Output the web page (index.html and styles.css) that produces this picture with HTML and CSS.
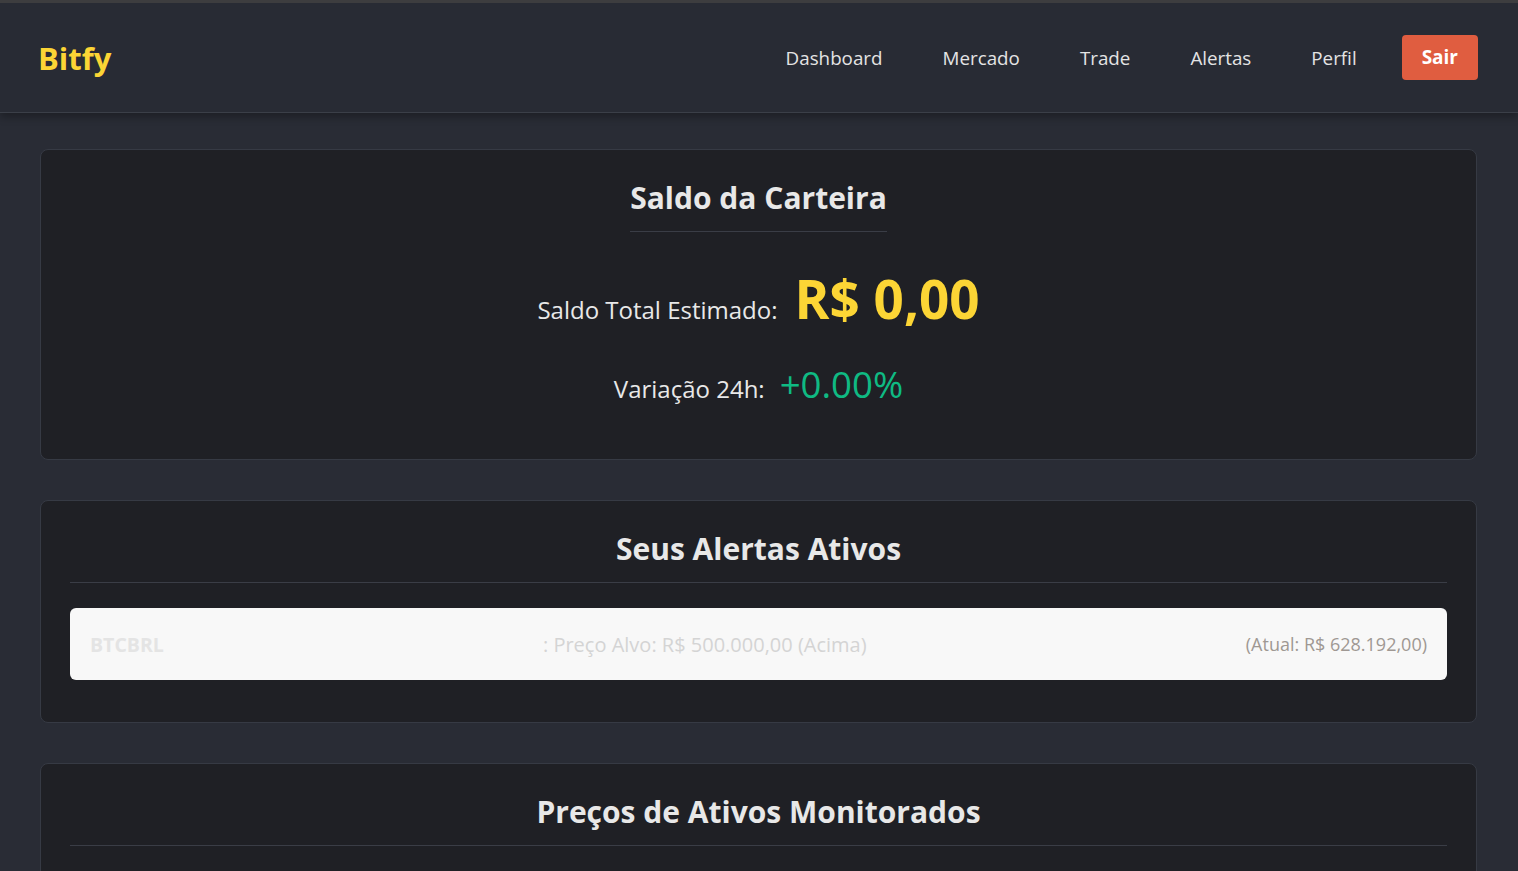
FILE: index.html
```html
<!DOCTYPE html>
<html lang="pt-BR">
<head>
<meta charset="utf-8">
<title>Bitfy - Dashboard</title>
<link rel="stylesheet" href="styles.css">
</head>
<body>
<header class="topbar">
  <div class="logo">Bitfy</div>
  <nav class="nav">
    <a class="nav-link" href="#">Dashboard</a>
    <a class="nav-link" href="#">Mercado</a>
    <a class="nav-link" href="#">Trade</a>
    <a class="nav-link" href="#">Alertas</a>
    <a class="nav-link" href="#">Perfil</a>
    <a class="nav-btn" href="#">Sair</a>
  </nav>
</header>
<main class="main">
  <section class="card card-balance">
    <h2 class="card-title inline">Saldo da Carteira</h2>
    <div class="balance-row">
      <span class="balance-label">Saldo Total Estimado:</span>
      <span class="balance-value">R$ 0,00</span>
    </div>
    <div class="change-row">
      <span class="change-label">Variação 24h:</span>
      <span class="change-value">+0.00%</span>
    </div>
  </section>
  <section class="card">
    <h2 class="card-title">Seus Alertas Ativos</h2>
    <div class="alert-item">
      <span class="alert-symbol">BTCBRL</span>
      <span class="alert-target">: Preço Alvo: R$ 500.000,00 (Acima)</span>
      <span class="alert-current">(Atual: R$ 628.192,00)</span>
    </div>
  </section>
  <section class="card">
    <h2 class="card-title">Preços de Ativos Monitorados</h2>
    <div class="prices-body"></div>
  </section>
</main>
</body>
</html>
```
FILE: styles.css
```css
* { box-sizing: border-box; }
html, body { margin: 0; padding: 0; }
body {
  background: #292c35;
  font-family: "Open Sans", "Noto Sans", sans-serif;
  color: #e6e6e6;
  border-top: 3px solid #3d3d3f;
}
.topbar {
  height: 110px;
  background: #282b34;
  border-bottom: 1px solid #3b3f48;
  box-shadow: 0 4px 8px rgba(0,0,0,0.3);
  display: flex;
  align-items: center;
  justify-content: space-between;
  padding: 0 40px 0 38px;
  position: relative;
}
.logo {
  font-size: 31px;
  font-weight: 700;
  color: #fcd535;
}
.nav { display: flex; align-items: center; }
.nav-link {
  color: #e4e4e4;
  text-decoration: none;
  font-size: 18.8px;
  padding: 8px 15px;
  margin-left: 30px;
}
.nav-btn {
  margin-left: 30px;
  background: #e05d40;
  color: #ffffff;
  font-weight: 700;
  font-size: 19px;
  text-decoration: none;
  padding: 10px 20px;
  border-radius: 4px;
  line-height: 25px;
}
.main { padding: 36px 41px 0 40px; }
.card {
  background: #1f2025;
  border: 1px solid #363a44;
  border-radius: 8px;
  padding: 27px 29px 42px;
  margin-bottom: 40px;
  text-align: center;
}
.card-title {
  margin: 0;
  font-size: 30px;
  font-weight: 700;
  color: #e8e8e8;
  padding-bottom: 13px;
  border-bottom: 1px solid #3a3d46;
}
.card-title.inline { display: inline-block; }
.card-balance { padding-bottom: 50px; }
.balance-row {
  margin-top: 30px;
  display: flex;
  justify-content: center;
  align-items: baseline;
}
.balance-label { font-size: 24px; color: #e8e8e8; margin-right: 17px; }
.balance-value { font-size: 53px; font-weight: 700; color: #fcd535; }
.change-row {
  margin-top: 24px;
  display: flex;
  justify-content: center;
  align-items: baseline;
}
.change-label { font-size: 24px; color: #e8e8e8; margin-right: 15px; }
.change-value { font-size: 36.6px; color: #0fba83; }
.alert-item {
  margin-top: 25px;
  background: #f8f8f8;
  border-radius: 6px;
  height: 72px;
  padding: 0 20px;
  display: flex;
  align-items: center;
  justify-content: space-between;
  font-size: 18px;
}
.alert-symbol { font-weight: 700; color: #e4e4e4; font-size: 19.5px; }
.alert-target { color: #d4d4d4; font-size: 20px; }
.alert-current { color: #9f9893; }
.prices-body { height: 40px; }
```
